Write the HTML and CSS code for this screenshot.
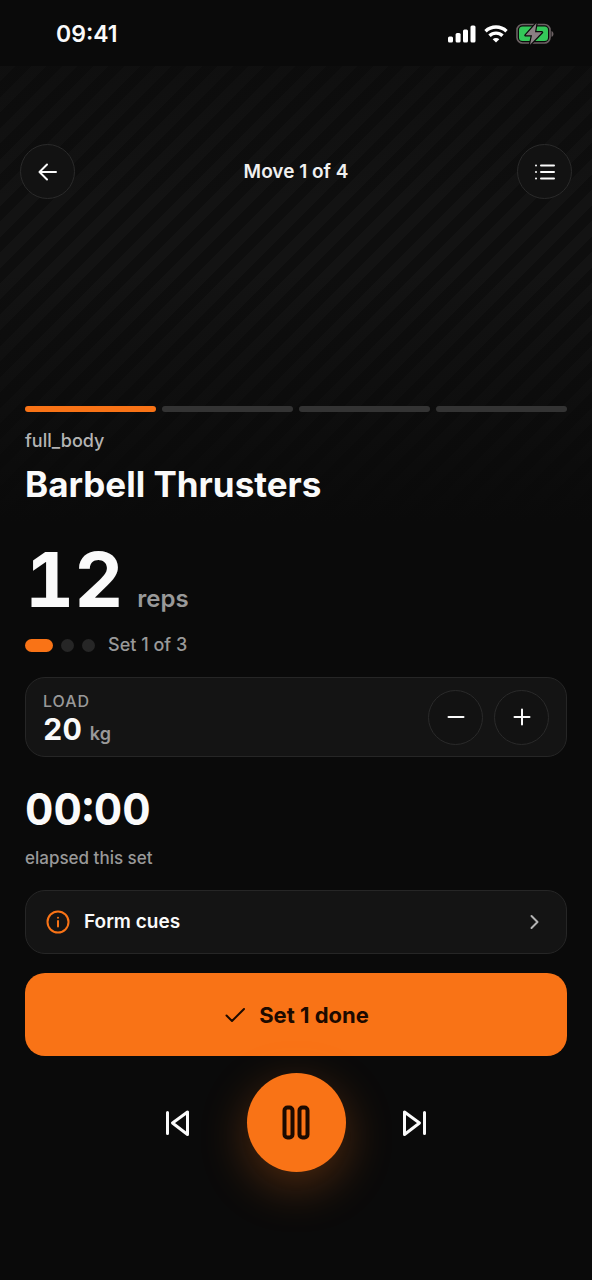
FILE: index.html
```html
<!DOCTYPE html>
<html lang="en">
<head>
<meta charset="utf-8">
<meta name="viewport" content="width=device-width, initial-scale=1">
<title>Barbell Thrusters</title>
<link rel="stylesheet" href="styles.css">
</head>
<body>
<div class="status">
  <time class="clock">09:41</time>
  <div class="indicators">
    <svg width="28" height="18" viewBox="0 0 28 18" fill="#fff" aria-hidden="true"><rect x="0" y="11.500" width="5" height="6" rx="1.500"/><rect x="7.600" y="8" width="5" height="9.500" rx="1.500"/><rect x="15" y="4.500" width="5" height="13" rx="1.500"/><rect x="22.500" y="0.500" width="5" height="17" rx="1.500"/></svg>
    <svg width="24" height="18" viewBox="0 0 24 18" fill="none" stroke="#fff" stroke-width="3.400" aria-hidden="true"><path d="M1.500 6.200a15.300 15.300 0 0 1 21 0"/><path d="M5.500 10.800a9.300 9.300 0 0 1 13 0"/><path d="M12 17.500l-3.300-3.200a4.600 4.600 0 0 1 6.600 0z" fill="#fff" stroke="none"/></svg>
    <svg width="38" height="22" viewBox="0 0 38 22" aria-hidden="true"><rect x="1" y="1.500" width="33" height="18.500" rx="5.500" fill="none" stroke="#6c6264" stroke-width="1.600"/><rect x="3" y="3.500" width="29" height="14.500" rx="3.500" fill="#34c759"/><path d="M35.500 8c2.600.8 2.600 5 0 5.800z" fill="#6c6264"/><path d="M20.500 0L9.500 12.300h6.500L14 21.800 26 9.300h-7z" fill="#8a8083" stroke="#0a0a0a" stroke-width="2.400" stroke-linejoin="round" paint-order="stroke"/></svg>
  </div>
</div>
<main>
  <section class="hero">
    <header class="topbar">
      <button class="round" aria-label="Back"><svg class="icon" viewBox="0 0 24 24"><path d="M20 12H3.500M11 4.500L3.500 12l7.500 7.500"/></svg></button>
      <span class="move">Move 1 of 4</span>
      <button class="round" aria-label="Move list"><svg class="icon" viewBox="0 0 24 24"><path d="M8 5.500h13M8 12h13M8 18.500h13M3 5.500h.01M3 12h.01M3 18.500h.01"/></svg></button>
    </header>
    <div class="heading">
      <div class="progress" role="img" aria-label="Move 1 of 4"><i class="on"></i><i></i><i></i><i></i></div>
      <p class="tag">full_body</p>
      <h1>Barbell Thrusters</h1>
    </div>
  </section>
  <section class="body">
    <p class="reps"><strong>12</strong><span>reps</span></p>
    <div class="sets"><i class="on"></i><i></i><i></i><span>Set 1 of 3</span></div>
    <div class="card load">
      <div class="amount">
        <p class="label">LOAD</p>
        <p class="weight"><strong>20</strong><span>kg</span></p>
      </div>
      <div class="stepper">
        <button class="round" aria-label="Decrease load"><svg class="icon" viewBox="0 0 24 24"><path d="M4.500 12h15"/></svg></button>
        <button class="round" aria-label="Increase load"><svg class="icon" viewBox="0 0 24 24"><path d="M4.500 12h15M12 4.500v15"/></svg></button>
      </div>
    </div>
    <time class="timer">00:00</time>
    <p class="elapsed">elapsed this set</p>
    <button class="card cues">
      <svg class="info" viewBox="0 0 24 24"><circle cx="12" cy="12" r="10.500"/><path d="M12 11v5.500M12 7.700v.1"/></svg>
      <span>Form cues</span>
      <svg class="chevron" viewBox="0 0 24 24"><path d="M9.500 6l6 6-6 6"/></svg>
    </button>
    <button class="done"><svg class="check" viewBox="0 0 24 24"><path d="M3.500 12.500l5.500 5.500L21 6"/></svg>Set 1 done</button>
    <div class="controls">
      <button class="skip" aria-label="Previous move"><svg viewBox="0 0 30 30"><path d="M5.500 4.500v21M25.500 4v22.500L10.500 15z"/></svg></button>
      <button class="pause" aria-label="Pause"><svg viewBox="0 0 40 40"><rect x="8.500" y="4.500" width="8" height="30" rx="3"/><rect x="23.500" y="4.500" width="8" height="30" rx="3"/></svg></button>
      <button class="skip" aria-label="Next move"><svg viewBox="0 0 30 30"><path d="M24.500 4.500v21M4.500 4v22.500L19.500 15z"/></svg></button>
    </div>
  </section>
</main>
</body>
</html>
```
FILE: styles.css
```css
* { box-sizing: border-box; }
body {
  margin: 0;
  min-height: 100vh;
  background: #0a0a0a;
  color: #fafafa;
  font-family: Inter, "Liberation Sans", sans-serif;
}
p, h1 { margin: 0; }
button { font: inherit; color: inherit; padding: 0; border: 0; background: none; cursor: pointer; }
svg { display: block; }

.status {
  height: 66px;
  padding: 2px 38px 0 56px;
  display: flex;
  align-items: center;
  justify-content: space-between;
}
.clock { font-size: 23px; font-weight: 600; line-height: 28px; }
.indicators { display: flex; align-items: center; gap: 8px; }

.hero {
  height: 456px;
  padding: 78px 20px 14px;
  display: flex;
  flex-direction: column;
  justify-content: space-between;
  background:
    linear-gradient(to bottom, rgba(10, 10, 10, 0.4), rgba(10, 10, 10, 0) 30%, rgba(10, 10, 10, 0) 45%, #0a0a0a),
    repeating-linear-gradient(135deg, #131313 0 11px, #0e0e0e 11px 22px);
}
.topbar { display: flex; align-items: center; justify-content: space-between; }
.move { font-size: 19px; font-weight: 600; line-height: 24px; color: #f0f0f0; }
.round {
  width: 55px;
  height: 55px;
  display: grid;
  place-items: center;
  border: 1px solid #2a2a2a;
  border-radius: 50%;
  background: #121212;
}
.icon { width: 24px; height: 24px; fill: none; stroke: #fafafa; stroke-width: 2; stroke-linecap: round; stroke-linejoin: round; }

.heading { padding: 0 5px; }
.progress { display: flex; gap: 6px; }
.progress i { flex: 1; height: 6px; border-radius: 3px; background: #333; }
.progress .on, .sets .on { background: #f97316; }
.tag { margin-top: 17px; font-size: 18px; font-weight: 500; line-height: 24px; color: #b4b4b4; }
h1 { margin-top: 7px; font-size: 35px; font-weight: 700; line-height: 48px; }

.body { padding: 15px 25px 48px; }
.reps { display: flex; align-items: baseline; gap: 14px; line-height: 84px; }
.reps strong { font-size: 76px; font-weight: 700; font-variant-numeric: tabular-nums; }
.reps span { font-size: 24px; font-weight: 600; line-height: 24px; color: #999; }
.sets { margin-top: 12px; display: flex; align-items: center; gap: 8px; }
.sets i { width: 13px; height: 13px; border-radius: 7px; background: #262626; }
.sets .on { width: 28px; }
.sets span { margin-left: 5px; font-size: 18px; font-weight: 500; line-height: 24px; color: #999; }

.card { width: 100%; border: 1px solid #262626; border-radius: 20px; background: #141414; }
.load { margin-top: 20px; height: 80px; padding: 0 17px; display: flex; align-items: center; justify-content: space-between; }
.amount { padding-top: 4px; }
.label { font-size: 16px; font-weight: 500; line-height: 20px; letter-spacing: 1px; color: #999; }
.weight { display: flex; align-items: baseline; gap: 8px; line-height: 36px; }
.weight strong { font-size: 30px; font-weight: 700; font-variant-numeric: tabular-nums; }
.weight span { font-size: 18px; font-weight: 600; line-height: 18px; color: #999; }
.stepper { display: flex; gap: 11px; }

.timer { display: block; margin-top: 24px; font-size: 44px; font-weight: 700; line-height: 56px; font-variant-numeric: tabular-nums; }
.elapsed { margin-top: 9px; font-size: 17px; font-weight: 500; line-height: 24px; color: #999; }
.cues { margin-top: 20px; height: 64px; padding: 0 20px; display: flex; align-items: center; gap: 14px; text-align: left; }
.cues span { flex: 1; font-size: 19px; font-weight: 600; line-height: 24px; }
.info { width: 24px; height: 24px; fill: none; stroke: #f97316; stroke-width: 2; stroke-linecap: round; }
.chevron { width: 24px; height: 24px; fill: none; stroke: #b4b4b4; stroke-width: 2; stroke-linecap: round; stroke-linejoin: round; }
.done {
  margin-top: 19px;
  width: 100%;
  height: 83px;
  display: flex;
  align-items: center;
  justify-content: center;
  gap: 12px;
  border-radius: 20px;
  background: #f97316;
  color: #1c0a00;
  font-size: 22px;
  font-weight: 700;
}
.check { width: 24px; height: 24px; fill: none; stroke: currentColor; stroke-width: 2; stroke-linecap: round; stroke-linejoin: round; }

.controls { margin-top: 17px; display: flex; align-items: center; justify-content: center; gap: 42px; }
.skip { width: 55px; height: 55px; display: grid; place-items: center; }
.skip svg { width: 30px; height: 30px; fill: none; stroke: #fafafa; stroke-width: 3; stroke-linecap: round; stroke-linejoin: round; }
.pause {
  width: 99px;
  height: 99px;
  display: grid;
  place-items: center;
  border-radius: 50%;
  background: #f97316;
  box-shadow: 0 14px 48px rgba(249, 115, 22, 0.3);
}
.pause svg { width: 40px; height: 40px; fill: none; stroke: #1c0a00; stroke-width: 4; }
```
